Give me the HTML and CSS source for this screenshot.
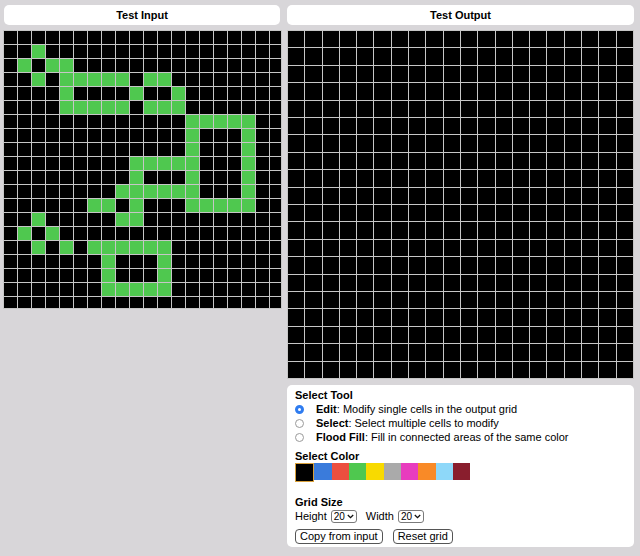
FILE: index.html
```html
<!DOCTYPE html>
<html lang="en">
<head>
<meta charset="utf-8">
<title>Test Grid Editor</title>
<link rel="stylesheet" href="styles.css">
</head>
<body>
<div class="app">
  <section class="col">
    <div class="title">Test Input</div>
    <div class="grid-frame grid-in">
      <div class="cells cells-in">
<i></i><i></i><i></i><i></i><i></i><i></i><i></i><i></i><i></i><i></i><i></i><i></i><i></i><i></i><i></i><i></i><i></i><i></i><i></i><i></i>
<i></i><i></i><i class="g"></i><i></i><i></i><i></i><i></i><i></i><i></i><i></i><i></i><i></i><i></i><i></i><i></i><i></i><i></i><i></i><i></i><i></i>
<i></i><i class="g"></i><i></i><i class="g"></i><i class="g"></i><i></i><i></i><i></i><i></i><i></i><i></i><i></i><i></i><i></i><i></i><i></i><i></i><i></i><i></i><i></i>
<i></i><i></i><i class="g"></i><i></i><i class="g"></i><i class="g"></i><i class="g"></i><i class="g"></i><i class="g"></i><i></i><i class="g"></i><i class="g"></i><i></i><i></i><i></i><i></i><i></i><i></i><i></i><i></i>
<i></i><i></i><i></i><i></i><i class="g"></i><i></i><i></i><i></i><i></i><i class="g"></i><i></i><i></i><i class="g"></i><i></i><i></i><i></i><i></i><i></i><i></i><i></i>
<i></i><i></i><i></i><i></i><i class="g"></i><i class="g"></i><i class="g"></i><i class="g"></i><i class="g"></i><i></i><i class="g"></i><i class="g"></i><i class="g"></i><i></i><i></i><i></i><i></i><i></i><i></i><i></i>
<i></i><i></i><i></i><i></i><i></i><i></i><i></i><i></i><i></i><i></i><i></i><i></i><i></i><i class="g"></i><i class="g"></i><i class="g"></i><i class="g"></i><i class="g"></i><i></i><i></i>
<i></i><i></i><i></i><i></i><i></i><i></i><i></i><i></i><i></i><i></i><i></i><i></i><i></i><i class="g"></i><i></i><i></i><i></i><i class="g"></i><i></i><i></i>
<i></i><i></i><i></i><i></i><i></i><i></i><i></i><i></i><i></i><i></i><i></i><i></i><i></i><i class="g"></i><i></i><i></i><i></i><i class="g"></i><i></i><i></i>
<i></i><i></i><i></i><i></i><i></i><i></i><i></i><i></i><i></i><i class="g"></i><i class="g"></i><i class="g"></i><i class="g"></i><i class="g"></i><i></i><i></i><i></i><i class="g"></i><i></i><i></i>
<i></i><i></i><i></i><i></i><i></i><i></i><i></i><i></i><i></i><i class="g"></i><i></i><i></i><i></i><i class="g"></i><i></i><i></i><i></i><i class="g"></i><i></i><i></i>
<i></i><i></i><i></i><i></i><i></i><i></i><i></i><i></i><i class="g"></i><i class="g"></i><i class="g"></i><i class="g"></i><i class="g"></i><i class="g"></i><i></i><i></i><i></i><i class="g"></i><i></i><i></i>
<i></i><i></i><i></i><i></i><i></i><i></i><i class="g"></i><i class="g"></i><i></i><i class="g"></i><i></i><i></i><i></i><i class="g"></i><i class="g"></i><i class="g"></i><i class="g"></i><i class="g"></i><i></i><i></i>
<i></i><i></i><i class="g"></i><i></i><i></i><i></i><i></i><i></i><i class="g"></i><i class="g"></i><i></i><i></i><i></i><i></i><i></i><i></i><i></i><i></i><i></i><i></i>
<i></i><i class="g"></i><i></i><i class="g"></i><i></i><i></i><i></i><i></i><i></i><i></i><i></i><i></i><i></i><i></i><i></i><i></i><i></i><i></i><i></i><i></i>
<i></i><i></i><i class="g"></i><i></i><i class="g"></i><i></i><i class="g"></i><i class="g"></i><i class="g"></i><i class="g"></i><i class="g"></i><i class="g"></i><i></i><i></i><i></i><i></i><i></i><i></i><i></i><i></i>
<i></i><i></i><i></i><i></i><i></i><i></i><i></i><i class="g"></i><i></i><i></i><i></i><i class="g"></i><i></i><i></i><i></i><i></i><i></i><i></i><i></i><i></i>
<i></i><i></i><i></i><i></i><i></i><i></i><i></i><i class="g"></i><i></i><i></i><i></i><i class="g"></i><i></i><i></i><i></i><i></i><i></i><i></i><i></i><i></i>
<i></i><i></i><i></i><i></i><i></i><i></i><i></i><i class="g"></i><i class="g"></i><i class="g"></i><i class="g"></i><i class="g"></i><i></i><i></i><i></i><i></i><i></i><i></i><i></i><i></i>
<i></i><i></i><i></i><i></i><i></i><i></i><i></i><i></i><i></i><i></i><i></i><i></i><i></i><i></i><i></i><i></i><i></i><i></i><i></i><i></i>
      </div>
    </div>
  </section>

  <section class="col">
    <div class="title">Test Output</div>
    <div class="grid-frame grid-out">
      <div class="cells cells-out">
<i></i><i></i><i></i><i></i><i></i><i></i><i></i><i></i><i></i><i></i><i></i><i></i><i></i><i></i><i></i><i></i><i></i><i></i><i></i><i></i>
<i></i><i></i><i></i><i></i><i></i><i></i><i></i><i></i><i></i><i></i><i></i><i></i><i></i><i></i><i></i><i></i><i></i><i></i><i></i><i></i>
<i></i><i></i><i></i><i></i><i></i><i></i><i></i><i></i><i></i><i></i><i></i><i></i><i></i><i></i><i></i><i></i><i></i><i></i><i></i><i></i>
<i></i><i></i><i></i><i></i><i></i><i></i><i></i><i></i><i></i><i></i><i></i><i></i><i></i><i></i><i></i><i></i><i></i><i></i><i></i><i></i>
<i></i><i></i><i></i><i></i><i></i><i></i><i></i><i></i><i></i><i></i><i></i><i></i><i></i><i></i><i></i><i></i><i></i><i></i><i></i><i></i>
<i></i><i></i><i></i><i></i><i></i><i></i><i></i><i></i><i></i><i></i><i></i><i></i><i></i><i></i><i></i><i></i><i></i><i></i><i></i><i></i>
<i></i><i></i><i></i><i></i><i></i><i></i><i></i><i></i><i></i><i></i><i></i><i></i><i></i><i></i><i></i><i></i><i></i><i></i><i></i><i></i>
<i></i><i></i><i></i><i></i><i></i><i></i><i></i><i></i><i></i><i></i><i></i><i></i><i></i><i></i><i></i><i></i><i></i><i></i><i></i><i></i>
<i></i><i></i><i></i><i></i><i></i><i></i><i></i><i></i><i></i><i></i><i></i><i></i><i></i><i></i><i></i><i></i><i></i><i></i><i></i><i></i>
<i></i><i></i><i></i><i></i><i></i><i></i><i></i><i></i><i></i><i></i><i></i><i></i><i></i><i></i><i></i><i></i><i></i><i></i><i></i><i></i>
<i></i><i></i><i></i><i></i><i></i><i></i><i></i><i></i><i></i><i></i><i></i><i></i><i></i><i></i><i></i><i></i><i></i><i></i><i></i><i></i>
<i></i><i></i><i></i><i></i><i></i><i></i><i></i><i></i><i></i><i></i><i></i><i></i><i></i><i></i><i></i><i></i><i></i><i></i><i></i><i></i>
<i></i><i></i><i></i><i></i><i></i><i></i><i></i><i></i><i></i><i></i><i></i><i></i><i></i><i></i><i></i><i></i><i></i><i></i><i></i><i></i>
<i></i><i></i><i></i><i></i><i></i><i></i><i></i><i></i><i></i><i></i><i></i><i></i><i></i><i></i><i></i><i></i><i></i><i></i><i></i><i></i>
<i></i><i></i><i></i><i></i><i></i><i></i><i></i><i></i><i></i><i></i><i></i><i></i><i></i><i></i><i></i><i></i><i></i><i></i><i></i><i></i>
<i></i><i></i><i></i><i></i><i></i><i></i><i></i><i></i><i></i><i></i><i></i><i></i><i></i><i></i><i></i><i></i><i></i><i></i><i></i><i></i>
<i></i><i></i><i></i><i></i><i></i><i></i><i></i><i></i><i></i><i></i><i></i><i></i><i></i><i></i><i></i><i></i><i></i><i></i><i></i><i></i>
<i></i><i></i><i></i><i></i><i></i><i></i><i></i><i></i><i></i><i></i><i></i><i></i><i></i><i></i><i></i><i></i><i></i><i></i><i></i><i></i>
<i></i><i></i><i></i><i></i><i></i><i></i><i></i><i></i><i></i><i></i><i></i><i></i><i></i><i></i><i></i><i></i><i></i><i></i><i></i><i></i>
<i></i><i></i><i></i><i></i><i></i><i></i><i></i><i></i><i></i><i></i><i></i><i></i><i></i><i></i><i></i><i></i><i></i><i></i><i></i><i></i>
      </div>
    </div>

    <div class="panel">
      <div class="heading">Select Tool</div>
      <div class="tool"><span class="radio on"></span><span><b>Edit</b>: Modify single cells in the output grid</span></div>
      <div class="tool"><span class="radio"></span><span><b>Select</b>: Select multiple cells to modify</span></div>
      <div class="tool"><span class="radio"></span><span><b>Flood Fill</b>: Fill in connected areas of the same color</span></div>

      <div class="heading heading-color">Select Color</div>
      <div class="swatches">
        <span class="sw sw-black selected"></span>
        <span class="sw sw-blue"></span>
        <span class="sw sw-red"></span>
        <span class="sw sw-green"></span>
        <span class="sw sw-yellow"></span>
        <span class="sw sw-gray"></span>
        <span class="sw sw-magenta"></span>
        <span class="sw sw-orange"></span>
        <span class="sw sw-sky"></span>
        <span class="sw sw-maroon"></span>
      </div>

      <div class="heading heading-size">Grid Size</div>
      <div class="size-row">
        <span>Height</span>
        <span class="select-box"><span>20</span><svg class="chev" width="7" height="5" viewBox="0 0 7 5"><path d="M0.8 1 L3.5 3.7 L6.2 1" fill="none" stroke="#111" stroke-width="1.3"/></svg></span>
        <span class="size-label">Width</span>
        <span class="select-box"><span>20</span><svg class="chev" width="7" height="5" viewBox="0 0 7 5"><path d="M0.8 1 L3.5 3.7 L6.2 1" fill="none" stroke="#111" stroke-width="1.3"/></svg></span>
      </div>

      <div class="buttons">
        <button class="btn" type="button">Copy from input</button>
        <button class="btn" type="button">Reset grid</button>
      </div>
    </div>
  </section>
</div>
</body>
</html>
```

FILE: styles.css
```css
html, body {
  margin: 0;
  padding: 0;
  background: #d8d6d9;
}

body {
  font-family: "Liberation Sans", Arial, Helvetica, sans-serif;
  font-size: 11px;
  color: #000;
}

.app {
  display: grid;
  grid-template-columns: 276px 347px;
  column-gap: 7px;
  align-items: start;
  padding: 5px 0 0 4px;
}

.col {
  display: flex;
  flex-direction: column;
}

.title {
  height: 20px;
  background: #fff;
  border-radius: 5px;
  font-weight: bold;
  display: flex;
  align-items: center;
  justify-content: center;
}

.grid-frame {
  margin-top: 5px;
  border: 1px solid #c6c6c6;
  background: #c6c6c6;
  overflow: hidden;
}

.grid-in {
  width: 277px;
  height: 277px;
  margin-left: -1px;
}

.grid-out {
  width: 345px;
  height: 347px;
}

.cells {
  display: grid;
  gap: 1px;
}

.cells-in {
  grid-template-columns: repeat(20, 13px);
  grid-auto-rows: 13px;
  width: max-content;
}

.cells-out {
  grid-template-columns: repeat(20, 1fr);
  grid-template-rows: repeat(20, 1fr);
  height: 100%;
}

.cells i {
  display: block;
  background: #000;
}

.cells i.g {
  background: #4fc84f;
}

.panel {
  margin-top: 6px;
  background: #fff;
  border-radius: 5px;
  padding: 3px 8px 3px 8px;
}

.heading {
  font-weight: bold;
  line-height: 14px;
}

.heading-color {
  margin-top: 5px;
}

.heading-size {
  margin-top: 13px;
}

.tool {
  display: flex;
  align-items: center;
  height: 14px;
  line-height: 14px;
}

.radio {
  flex: none;
  width: 9px;
  height: 9px;
  box-sizing: border-box;
  border-radius: 50%;
  border: 1px solid #9a9a9a;
  background: #fff;
  margin-right: 12px;
}

.radio.on {
  border: 3px solid #2f7cf0;
  background: #fff;
}

.swatches {
  display: flex;
  align-items: flex-start;
  height: 19px;
}

.sw {
  display: block;
  width: 17.33px;
  height: 17px;
}

.sw.selected {
  border: 1px solid #d9a03a;
}

.sw-black { background: #000; }
.sw-blue { background: #3a7bdb; }
.sw-red { background: #ec4f3f; }
.sw-green { background: #4fc84f; }
.sw-yellow { background: #f8da00; }
.sw-gray { background: #aaaaaa; }
.sw-magenta { background: #e83cbe; }
.sw-orange { background: #f98a27; }
.sw-sky { background: #8ed8f9; }
.sw-maroon { background: #891e2d; }

.size-row {
  display: flex;
  align-items: center;
  height: 14px;
  line-height: 14px;
}

.select-box {
  display: inline-flex;
  align-items: center;
  justify-content: space-between;
  width: 26px;
  height: 13px;
  box-sizing: border-box;
  border: 1px solid #7a7a7a;
  border-radius: 3px;
  padding: 0 2px 0 2px;
  margin-left: 4px;
  font-size: 10px;
  line-height: 11px;
  background: #fff;
}

.chev {
  display: block;
}

.size-label {
  margin-left: 9px;
}

.buttons {
  display: flex;
  gap: 10px;
  margin-top: 6px;
}

.btn {
  appearance: none;
  -webkit-appearance: none;
  margin: 0;
  height: 15px;
  box-sizing: border-box;
  border: 1px solid #555;
  border-radius: 4px;
  background: #fff;
  padding: 0 4px;
  font-family: inherit;
  font-size: 11px;
  line-height: 13px;
  color: #000;
}
```
